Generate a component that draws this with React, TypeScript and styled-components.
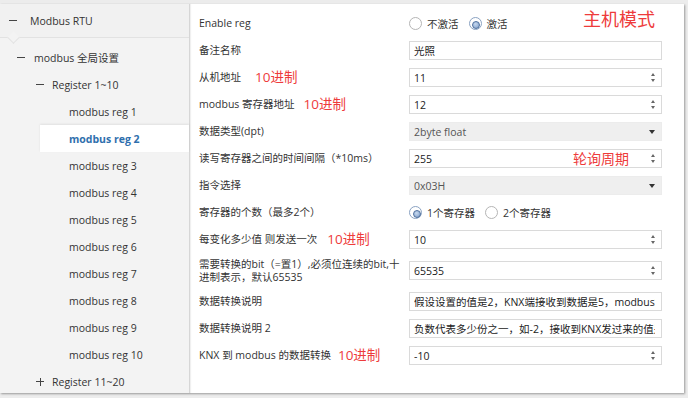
import styled, { createGlobalStyle } from "styled-components";

const GlobalStyle = createGlobalStyle`
  html, body { margin: 0; padding: 0; background: #ececec; }
  body {
    font-family: "Open Sans", "Noto Sans CJK SC", sans-serif;
    color: #333;
    -webkit-font-smoothing: antialiased;
  }
  * { box-sizing: border-box; }
`;

const Page = styled.div`
  width: 688px;
  height: 398px;
  padding-top: 4px;
`;

const Window = styled.div`
  display: flex;
  width: 684px;
  height: 389px;
  background: #fff;
  box-shadow: 1px 1px 2px rgba(0, 0, 0, 0.35);
`;

const Sidebar = styled.div`
  width: 190px;
  flex: none;
  background: #f3f3f3;
  border-right: 1px solid #d6d6d6;
  box-shadow: 1px 0 1px rgba(0, 0, 0, 0.06);
`;

const RootRow = styled.div`
  position: relative;
  display: flex;
  align-items: center;
  height: 34px;
  padding-left: 9px;
  font-size: 10.5px;
  border-bottom: 1px solid #e2e2e2;
  background: #f1f1f1;
  &::after {
    content: "";
    position: absolute;
    left: 9px;
    bottom: -5px;
    width: 8px;
    height: 8px;
    background: #f3f3f3;
    border-right: 1px solid #e2e2e2;
    border-bottom: 1px solid #e2e2e2;
    transform: rotate(45deg);
  }
`;

const TreeList = styled.div`
  padding-top: 6px;
`;

const TreeRow = styled.div<{ $indent: number; $active?: boolean }>`
  display: flex;
  align-items: center;
  height: 27px;
  padding-left: ${(p) => p.$indent}px;
  margin-left: ${(p) => (p.$active ? 40 : 0)}px;
  font-size: 10.5px;
  color: ${(p) => (p.$active ? "#2f6fad" : "#333")};
  font-weight: ${(p) => (p.$active ? 700 : 400)};
  background: ${(p) => (p.$active ? "#fff" : "transparent")};
  box-shadow: ${(p) => (p.$active ? "0 -1px 2px rgba(0,0,0,0.08)" : "none")};
`;

const Toggle = styled.span<{ $gap: number; $plus?: boolean }>`
  position: relative;
  width: 8px;
  height: 8px;
  flex: none;
  margin-right: ${(p) => p.$gap}px;
  &::before {
    content: "";
    position: absolute;
    left: 0;
    top: 3.5px;
    width: 8px;
    height: 1px;
    background: #444;
  }
  &::after {
    content: "";
    display: ${(p) => (p.$plus ? "block" : "none")};
    position: absolute;
    left: 3.5px;
    top: 0;
    width: 1px;
    height: 8px;
    background: #444;
  }
`;

const Main = styled.div`
  flex: 1;
  padding: 6px 0 0 9px;
`;

const FormRow = styled.div<{ $tall?: boolean }>`
  display: grid;
  grid-template-columns: 210px 253px;
  align-items: center;
  height: ${(p) => (p.$tall ? 35 : 27)}px;
`;

const Label = styled.div`
  font-size: 10.5px;
  color: #333;
  white-space: nowrap;
  line-height: 13px;
  display: flex;
  align-items: center;
`;

const Note = styled.span<{ $gap: number; $size?: number }>`
  color: #ee3b3b;
  font-size: ${(p) => p.$size ?? 13.5}px;
  margin-left: ${(p) => p.$gap}px;
  line-height: 1;
`;

const Field = styled.div<{ $select?: boolean }>`
  display: flex;
  align-items: center;
  height: 19px;
  padding: 0 6px 0 4px;
  border: 1px solid ${(p) => (p.$select ? "#ececec" : "#dadada")};
  background: ${(p) => (p.$select ? "#efefef" : "#fff")};
  color: ${(p) => (p.$select ? "#555" : "#222")};
  font-size: 10.5px;
  overflow: hidden;
  white-space: nowrap;
`;

const Value = styled.span`
  flex: 1;
  overflow: hidden;
`;

const Spin = styled.span<{ $offset?: number }>`
  display: flex;
  flex-direction: column;
  gap: 3px;
  flex: none;
  margin-left: ${(p) => p.$offset ?? 0}px;
  &::before,
  &::after {
    content: "";
    width: 0;
    height: 0;
    border-left: 2.5px solid transparent;
    border-right: 2.5px solid transparent;
  }
  &::before { border-bottom: 3px solid #666; }
  &::after { border-top: 3px solid #666; }
`;

const Caret = styled.span`
  flex: none;
  width: 0;
  height: 0;
  border-left: 3.5px solid transparent;
  border-right: 3.5px solid transparent;
  border-top: 4px solid #333;
`;

const RadioGroup = styled.div`
  display: flex;
  align-items: center;
  height: 19px;
  font-size: 10.5px;
  color: #333;
`;

const RadioItem = styled.label`
  display: flex;
  align-items: center;
  gap: 5px;
  margin-right: 10px;
  white-space: nowrap;
`;

const RadioCircle = styled.span<{ $on?: boolean }>`
  position: relative;
  width: 13px;
  height: 13px;
  border-radius: 50%;
  border: 1px solid ${(p) => (p.$on ? "#8aa2c2" : "#b5b5b5")};
  background: #fff;
  &::after {
    content: "";
    display: ${(p) => (p.$on ? "block" : "none")};
    position: absolute;
    left: 2.5px;
    top: 2.5px;
    width: 6px;
    height: 6px;
    border-radius: 50%;
    border: 1px solid #4d6f9d;
    background: radial-gradient(circle at 40% 35%, #c6d8ee, #7c9cc8);
  }
`;

const Headline = styled.span`
  margin-left: auto;
  margin-right: 7px;
  margin-top: -10px;
  color: #ee3b3b;
  font-size: 18px;
  line-height: 1;
`;

const Radio = ({ on, children }: { on?: boolean; children: string }) => (
  <RadioItem>
    <RadioCircle $on={on} />
    {children}
  </RadioItem>
);

const regs = Array.from({ length: 10 }, (_, i) => i + 1);

export default function App() {
  return (
    <Page>
      <GlobalStyle />
      <Window>
        <Sidebar>
          <RootRow>
            <Toggle $gap={13} />
            Modbus RTU
          </RootRow>
          <TreeList>
            <TreeRow $indent={17}>
              <Toggle $gap={9} />
              modbus 全局设置
            </TreeRow>
            <TreeRow $indent={36}>
              <Toggle $gap={8} />
              Register 1~10
            </TreeRow>
            {regs.map((n) => (
              <TreeRow key={n} $indent={n === 2 ? 29 : 69} $active={n === 2}>
                modbus reg {n}
              </TreeRow>
            ))}
            <TreeRow $indent={36}>
              <Toggle $gap={8} $plus />
              Register 11~20
            </TreeRow>
          </TreeList>
        </Sidebar>

        <Main>
          <FormRow>
            <Label>Enable reg</Label>
            <RadioGroup>
              <Radio>不激活</Radio>
              <Radio on>激活</Radio>
              <Headline>主机模式</Headline>
            </RadioGroup>
          </FormRow>
          <FormRow>
            <Label>备注名称</Label>
            <Field>
              <Value>光照</Value>
            </Field>
          </FormRow>
          <FormRow>
            <Label>
              从机地址<Note $gap={14}>10进制</Note>
            </Label>
            <Field>
              <Value>11</Value>
              <Spin />
            </Field>
          </FormRow>
          <FormRow>
            <Label>
              modbus 寄存器地址<Note $gap={9}>10进制</Note>
            </Label>
            <Field>
              <Value>12</Value>
              <Spin />
            </Field>
          </FormRow>
          <FormRow>
            <Label>数据类型(dpt)</Label>
            <Field $select>
              <Value>2byte float</Value>
              <Caret />
            </Field>
          </FormRow>
          <FormRow>
            <Label>读写寄存器之间的时间间隔（*10ms）</Label>
            <Field>
              <Value>255</Value>
              <Note $gap={0} $size={14}>
                轮询周期
              </Note>
              <Spin $offset={22} />
            </Field>
          </FormRow>
          <FormRow>
            <Label>指令选择</Label>
            <Field $select>
              <Value>0x03H</Value>
              <Caret />
            </Field>
          </FormRow>
          <FormRow>
            <Label>寄存器的个数（最多2个）</Label>
            <RadioGroup>
              <Radio on>1个寄存器</Radio>
              <Radio>2个寄存器</Radio>
            </RadioGroup>
          </FormRow>
          <FormRow>
            <Label>
              每变化多少值 则发送一次<Note $gap={10}>10进制</Note>
            </Label>
            <Field>
              <Value>10</Value>
              <Spin />
            </Field>
          </FormRow>
          <FormRow $tall>
            <Label>
              需要转换的bit（=置1）,必须位连续的bit,十
              <br />
              进制表示，默认65535
            </Label>
            <Field>
              <Value>65535</Value>
              <Spin />
            </Field>
          </FormRow>
          <FormRow>
            <Label>数据转换说明</Label>
            <Field>
              <Value>假设设置的值是2，KNX端接收到数据是5，modbus端接收到的数据是10</Value>
            </Field>
          </FormRow>
          <FormRow>
            <Label>数据转换说明 2</Label>
            <Field>
              <Value>负数代表多少份之一，如-2，接收到KNX发过来的值是10，modbus端</Value>
            </Field>
          </FormRow>
          <FormRow>
            <Label>
              KNX 到 modbus 的数据转换<Note $gap={7}>10进制</Note>
            </Label>
            <Field>
              <Value>-10</Value>
              <Spin />
            </Field>
          </FormRow>
        </Main>
      </Window>
    </Page>
  );
}
